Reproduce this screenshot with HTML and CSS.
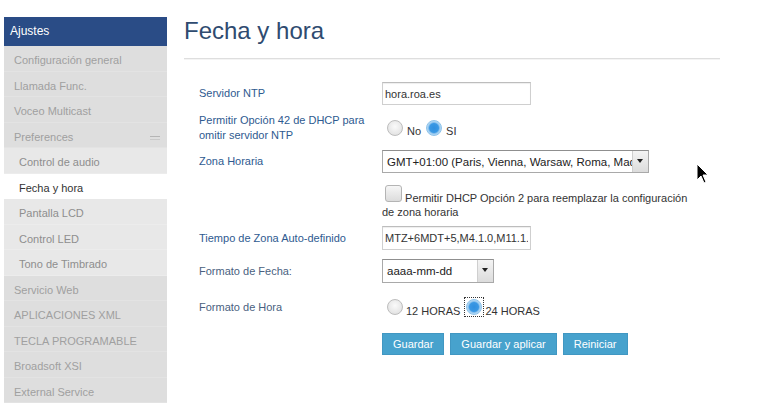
FILE: index.html
```html
<!DOCTYPE html>
<html lang="es">
<head>
<meta charset="utf-8">
<title>Fecha y hora</title>
<link rel="stylesheet" href="styles.css">
</head>
<body>
<div class="page">
  <nav class="sidebar">
    <div class="side-head">Ajustes</div>
    <ul class="menu">
      <li class="item">Configuración general</li>
      <li class="item">Llamada Func.</li>
      <li class="item">Voceo Multicast</li>
      <li class="item has-sub">Preferences <span class="collapse"></span></li>
      <li class="item sub">Control de audio</li>
      <li class="item sub active">Fecha y hora</li>
      <li class="item sub">Pantalla LCD</li>
      <li class="item sub">Control LED</li>
      <li class="item sub">Tono de Timbrado</li>
      <li class="item">Servicio Web</li>
      <li class="item">APLICACIONES XML</li>
      <li class="item">TECLA PROGRAMABLE</li>
      <li class="item">Broadsoft XSI</li>
      <li class="item">External Service</li>
    </ul>
  </nav>
  <main class="content">
    <h1 class="title">Fecha y hora</h1>
    <form class="form">
      <div class="row r1">
        <label class="lbl">Servidor NTP</label>
        <div class="ctl"><input class="text" type="text" value="hora.roa.es"></div>
      </div>
      <div class="row r2">
        <label class="lbl">Permitir Opción 42 de DHCP para omitir servidor NTP</label>
        <div class="ctl radios low">
          <span class="radio"></span><span class="rtxt">No</span>
          <span class="radio on"></span><span class="rtxt">SI</span>
        </div>
      </div>
      <div class="row r3">
        <label class="lbl">Zona Horaria</label>
        <div class="ctl"><div class="select wide"><span class="sval">GMT+01:00 (Paris, Vienna, Warsaw, Roma, Madrid)</span><span class="arrow"></span></div></div>
      </div>
      <div class="row r4">
        <span class="lbl"></span>
        <div class="ctl chk"><span class="checkbox"></span> Permitir DHCP Opción 2 para reemplazar la configuración de zona horaria</div>
      </div>
      <div class="row r5">
        <label class="lbl">Tiempo de Zona Auto-definido</label>
        <div class="ctl"><input class="text tall" type="text" value="MTZ+6MDT+5,M4.1.0,M11.1.0"></div>
      </div>
      <div class="row r6">
        <label class="lbl grey">Formato de Fecha:</label>
        <div class="ctl"><div class="select narrow"><span class="sval">aaaa-mm-dd</span><span class="arrow"></span></div></div>
      </div>
      <div class="row r7">
        <label class="lbl grey">Formato de Hora</label>
        <div class="ctl radios low2">
          <span class="radio"></span><span class="rtxt">12 HORAS</span>
          <span class="focus"><span class="radio on"></span></span><span class="rtxt tight">24 HORAS</span>
        </div>
      </div>
      <div class="row r8">
        <span class="lbl"></span>
        <div class="ctl buttons">
          <button type="button" class="btn">Guardar</button>
          <button type="button" class="btn">Guardar y aplicar</button>
          <button type="button" class="btn">Reiniciar</button>
        </div>
      </div>
    </form>
  </main>
  <svg class="cursor" width="14" height="22" viewBox="0 0 14 22"><path d="M1 1 L1 17 L5 13 L8 20 L10 19 L7 12 L12 12 Z" fill="#000" stroke="#fff" stroke-width="1"/></svg>
</div>
</body>
</html>
```

FILE: styles.css
```css
* { box-sizing: border-box; }
html, body { margin: 0; padding: 0; background: #fff; }
body {
  font-family: "Liberation Sans", Arial, sans-serif;
  font-size: 11px;
  color: #333;
  width: 780px;
  height: 411px;
  overflow: hidden;
}
.page {
  position: relative;
  display: flex;
  align-items: flex-start;
  padding: 17px 0 0 4px;
  height: 411px;
}
.sidebar { width: 163px; flex: none; }
.side-head {
  height: 29px;
  background: #2a4c86;
  color: #fff;
  font-size: 12px;
  line-height: 29px;
  padding-left: 6px;
}
.menu { list-style: none; margin: 0; padding: 0; background: #dedede; }
.item {
  height: 25.5px;
  line-height: 25px;
  padding: 2px 0 0 10px;
  color: #a0a0a0;
  border-bottom: 1px solid #e3e3e3;
  position: relative;
  white-space: nowrap;
}
.item.sub { background: #e8e8e8; padding-left: 15px; color: #8e8e8e; border-bottom-color: #ececec; }
.item.active { background: #fff; color: #333; border-bottom-color: #fff; }
.collapse {
  position: absolute;
  right: 7px;
  top: 13px;
  width: 10px;
  height: 4px;
  border-top: 1px solid #b5b5b5;
  border-bottom: 1px solid #c9c9c9;
}
.content { margin-left: 17px; width: 536px; }
.title {
  margin: 0;
  font-weight: normal;
  font-size: 24px;
  line-height: 28px;
  color: #2f4b70;
  padding-bottom: 13px;
  border-bottom: 1px solid #dedede;
  box-shadow: 0 1px 0 #f4f4f4;
}
.form { padding: 23px 0 0 15px; }
.row { display: grid; grid-template-columns: 183px auto; align-items: center; }
.r1 { height: 23px; }
.r2 { height: 31px; margin-top: 7px; }
.r3 { height: 23px; margin-top: 7px; }
.r4 { height: 36px; margin-top: 10px; align-items: start; }
.r5 { height: 24px; margin-top: 7px; }
.r6 { height: 24px; margin-top: 9px; }
.r7 { height: 22px; margin-top: 13px; }
.r8 { height: 22px; margin-top: 15px; }
.lbl { color: #2e5a90; line-height: 15px; }
.r2 .lbl { width: 175px; }
.lbl.grey { color: #4a5f80; }
.ctl { display: flex; align-items: center; }
.text {
  font-family: "Liberation Sans", Arial, sans-serif;
  font-size: 11px;
  color: #333;
  width: 149px;
  height: 23px;
  padding: 0 2px;
  border: 1px solid #cfcfcf;
  border-top-color: #bdbdbd;
  box-shadow: inset 0 1px 1px #eee;
  outline: none;
  margin: 0;
}
.text.tall { height: 24px; }
.radios { align-items: center; }
.radio {
  width: 16px;
  height: 16px;
  border-radius: 50%;
  border: 1px solid #bdbdbd;
  background: radial-gradient(circle at 50% 40%, #fafafa 0%, #e2e2e2 80%);
  margin-left: 5px;
  flex: none;
}
.radio.on {
  border-color: #8ec3ea;
  background: radial-gradient(circle, #2f8fdf 0%, #3a98e4 45%, #9fcdf1 60%, #d9ebf9 90%);
}
.rtxt { margin-left: 4px; padding-top: 6px; line-height: 14px; }
.low .rtxt { padding-top: 7px; }
.low2 .rtxt { padding-top: 7px; margin-left: 3px; }
.focus {
  margin-left: 4px;
  width: 20px;
  height: 20px;
  border: 1px dotted #333;
  display: flex;
  align-items: center;
  justify-content: center;
}
.focus .radio { margin-left: 0; }
.rtxt.tight { margin-left: 1px; }
.select {
  position: relative;
  height: 23px;
  border: 1px solid #a9a9a9;
  border-top-color: #8f8f8f;
  background: #fff;
  display: flex;
  align-items: center;
  overflow: hidden;
}
.select.wide { width: 267px; }
.select.narrow { width: 112px; height: 24px; }
.sval { white-space: nowrap; padding-left: 4px; color: #222; font-size: 11.5px; }
.arrow {
  position: absolute;
  right: 0;
  top: 0;
  bottom: 0;
  width: 16px;
  background: linear-gradient(#f4f4f4, #dcdcdc);
  border-left: 1px solid #cfcfcf;
}
.arrow::after {
  content: "";
  position: absolute;
  left: 4px;
  top: 8px;
  border-left: 3px solid transparent;
  border-right: 3px solid transparent;
  border-top: 4px solid #222;
}
.chk { display: block; line-height: 14px; color: #333; padding-top: 2px; width: 318px; }
.checkbox {
  display: inline-block;
  width: 17px;
  height: 17px;
  border: 1px solid #b4b4b4;
  border-radius: 3px;
  background: linear-gradient(#f6f6f6, #dcdcdc);
  vertical-align: baseline;
  margin-left: 3px;
}
.buttons { gap: 6px; }
.btn {
  font-family: "Liberation Sans", Arial, sans-serif;
  font-size: 11px;
  color: #fff;
  height: 22px;
  padding: 0 10px;
  background: #47a2cd;
  border: 1px solid #4197c2;
  border-radius: 0;
  margin: 0;
}
.cursor { position: absolute; left: 696px; top: 163px; }
```
